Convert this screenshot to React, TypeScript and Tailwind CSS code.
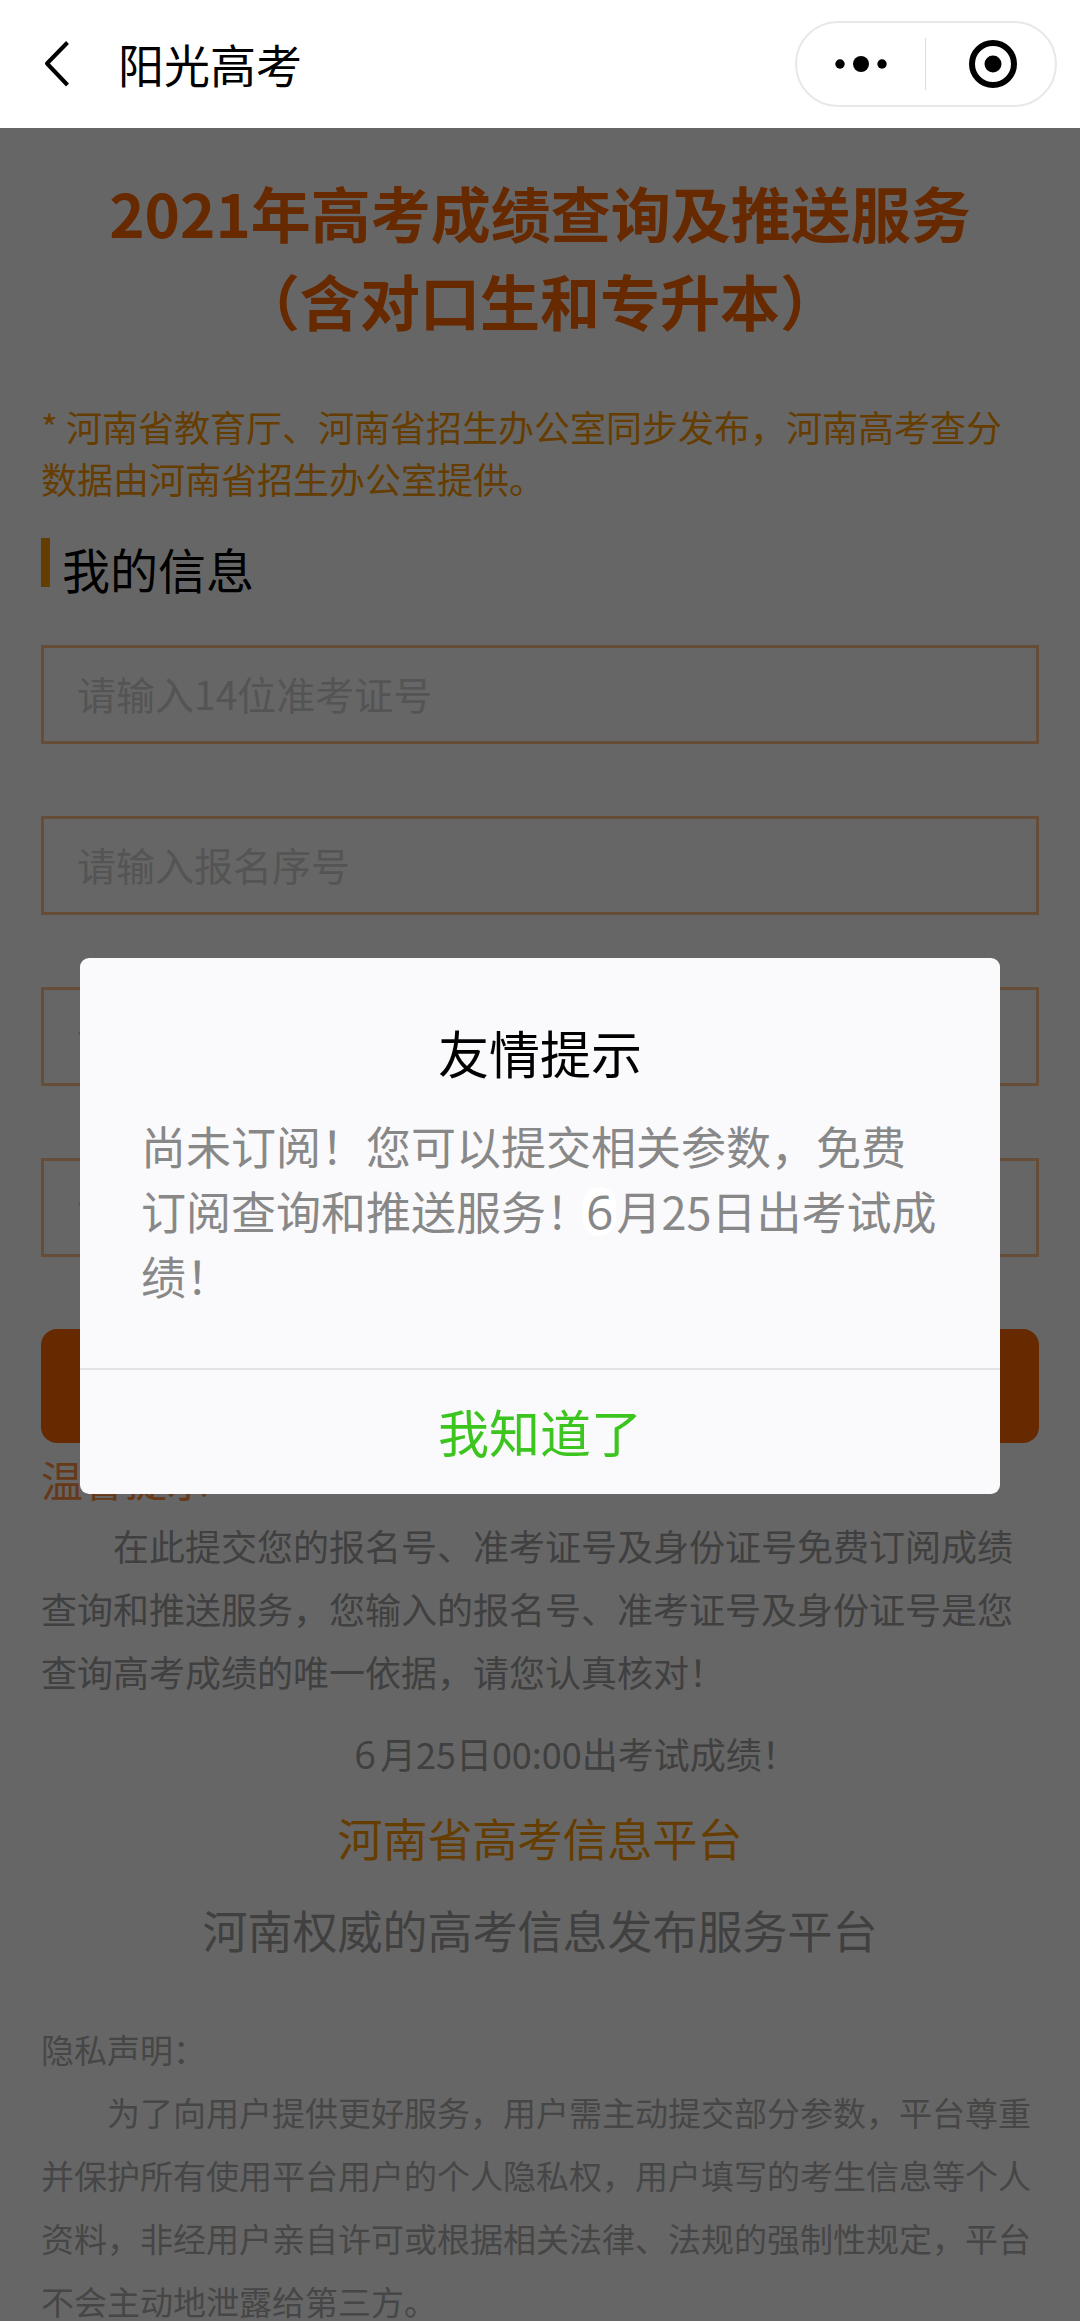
const fields = [
  { id: 'ticket', label: '准考证号', placeholder: '请输入14位准考证号' },
  { id: 'serial', label: '报名序号', placeholder: '请输入报名序号' },
  { id: 'idcard', label: '身份证号', placeholder: '请输入身份证号' },
  { id: 'phone', label: '手机号码', placeholder: '请输入手机号码' },
];

function Header() {
  return (
    <header className="flex h-32 shrink-0 items-center bg-white pl-11 pr-[23px]">
      <button type="button" aria-label="返回" className="mr-[46px] flex h-12 w-7 items-center">
        <svg viewBox="0 0 28 48" className="h-12 w-7" fill="none" stroke="black" strokeWidth="4">
          <path d="M23.500 2.500 L3 23.500 L23.500 45" strokeLinejoin="round" />
        </svg>
      </button>
      <h1 className="pb-0.5 text-[46px] leading-[64px] text-black">阳光高考</h1>
      <div className="ml-auto flex h-[86px] w-[262px] items-center rounded-full border-2 border-[#e8e8e8]">
        <button type="button" aria-label="更多" className="flex h-full w-1/2 items-center justify-center">
          <svg viewBox="0 0 52 18" className="h-[18px] w-[52px]">
            <circle cx="5" cy="9" r="4.700" />
            <circle cx="26" cy="9" r="8" />
            <circle cx="47" cy="9" r="4.700" />
          </svg>
        </button>
        <span className="h-[52px] w-px shrink-0 bg-[#dcdcdc]" />
        <button type="button" aria-label="关闭" className="flex h-full w-1/2 items-center justify-center pl-1">
          <svg viewBox="0 0 48 48" className="size-12">
            <circle cx="24" cy="24" r="21" fill="none" stroke="black" strokeWidth="6" />
            <circle cx="24" cy="24" r="8.500" />
          </svg>
        </button>
      </div>
    </header>
  );
}

function QueryPage() {
  return (
    <main className="h-full overflow-hidden bg-white px-[41px] pt-10">
      <h2 className="text-center text-[60px] font-bold leading-[88px] text-[#ff6600]">
        2021年高考成绩查询及推送服务
        <br />
        （含对口生和专升本）
      </h2>
      <p className="mt-[56px] pr-6 text-4xl leading-[52px] text-[#ff9900]">
        * 河南省教育厅、河南省招生办公室同步发布，河南高考查分数据由河南省招生办公室提供。
      </p>
      <div className="mt-[34px] flex items-start gap-3">
        <span className="h-[49px] w-[9px] bg-[#ff9900]" />
        <h3 className="text-5xl leading-[60px] text-black">我的信息</h3>
      </div>
      <form className="mt-[47px]">
        <div className="flex flex-col gap-[72px]">
          {fields.map((f) => (
            <input
              key={f.id}
              id={f.id}
              type="text"
              aria-label={f.label}
              placeholder={f.placeholder}
              className="h-[99px] w-full border-[3px] border-[#ffc08c] bg-transparent px-[33px] pb-1 text-[39px] text-black placeholder:text-[#d3d3d3]"
            />
          ))}
        </div>
        <button
          type="button"
          aria-label="提交"
          className="mt-[72px] block h-[114px] w-full rounded-2xl bg-[#ff6600]"
        />
      </form>
      <h3 className="mt-1 text-[42px] leading-[63px] text-[#ff9040]">温馨提示</h3>
      <p className="mt-1 indent-[2em] text-4xl leading-[63px] text-[#a0a0a0]">
        在此提交您的报名号、准考证号及身份证号免费订阅成绩查询和推送服务，您输入的报名号、准考证号及身份证号是您查询高考成绩的唯一依据，请您认真核对！
      </p>
      <p className="mt-5 text-center indent-[2em] text-4xl leading-[60px] text-[#a0a0a0]">
        <span className="mr-1 font-['Open_Sans'] text-[38px]">6</span>月25日00:00出考试成绩！
      </p>
      <p className="mt-[18px] text-center text-[45px] leading-[72px] text-[#ff9900]">河南省高考信息平台</p>
      <p className="mt-5 text-center text-[45px] leading-[72px] text-[#a0a0a0]">河南权威的高考信息发布服务平台</p>
      <section className="mt-[52px] text-[33px] leading-[63px] text-[#b0b0b0]">
        <h4>隐私声明：</h4>
        <p className="indent-[2em]">
          为了向用户提供更好服务，用户需主动提交部分参数，平台尊重并保护所有使用平台用户的个人隐私权，用户填写的考生信息等个人资料，非经用户亲自许可或根据相关法律、法规的强制性规定，平台不会主动地泄露给第三方。
        </p>
      </section>
    </main>
  );
}

function NoticeDialog() {
  return (
    <div className="absolute inset-0 flex items-center justify-center bg-black/60 px-20 pt-0.5">
      <div
        role="dialog"
        aria-modal="true"
        aria-labelledby="notice-title"
        className="w-full overflow-hidden rounded-[9px] bg-[#fafafc]"
      >
        <h2 id="notice-title" className="pt-[61px] text-center text-[51px] leading-[66px] text-black">
          友情提示
        </h2>
        <p className="mt-7 px-[61px] pb-[60px] text-[45px] leading-[65px] text-[#888888]">
          尚未订阅！您可以提交相关参数，免费订阅查询和推送服务！
          <span className="-ml-2 inline-block h-[49px] rounded-full bg-white px-[3px] font-['Open_Sans'] text-5xl leading-[49px]">
            6
          </span>
          月25日出考试成绩！
        </p>
        <button
          type="button"
          className="h-[126px] w-full border-t-2 border-[#e2e2e3] text-[51px] text-[#3cc51f]"
        >
          我知道了
        </button>
      </div>
    </div>
  );
}

export default function App() {
  return (
    <div className="flex h-screen flex-col overflow-hidden bg-white font-['Noto_Sans_CJK_SC',sans-serif]">
      <Header />
      <div className="relative min-h-0 flex-1">
        <QueryPage />
        <NoticeDialog />
      </div>
    </div>
  );
}
